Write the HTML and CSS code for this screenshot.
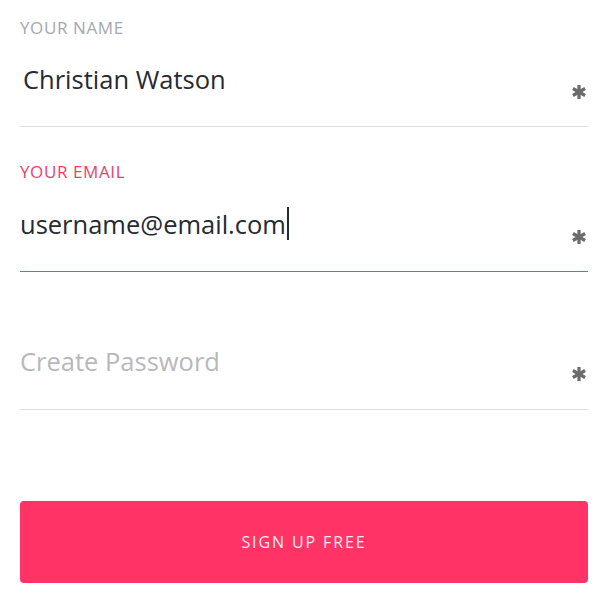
FILE: index.html
```html
<!DOCTYPE html>
<html lang="en">
<head>
<meta charset="utf-8">
<title>Sign up</title>
<link rel="stylesheet" href="styles.css">
</head>
<body>
<form class="signup">
  <div class="field">
    <label class="field-label">Your Name</label>
    <div class="field-row">
      <span class="field-value">Christian Watson</span>
      <svg class="req" viewBox="0 0 16 16" aria-hidden="true"><g stroke="#6b6b6b" stroke-width="3.2" stroke-linecap="butt"><line x1="8" y1="1" x2="8" y2="15"/><line x1="1.9" y1="4.5" x2="14.1" y2="11.5"/><line x1="1.9" y1="11.5" x2="14.1" y2="4.5"/></g></svg>
    </div>
  </div>
  <div class="field field-active">
    <label class="field-label">Your Email</label>
    <div class="field-row">
      <span class="field-value">username@email.com<span class="caret"></span></span>
      <svg class="req" viewBox="0 0 16 16" aria-hidden="true"><g stroke="#6b6b6b" stroke-width="3.2" stroke-linecap="butt"><line x1="8" y1="1" x2="8" y2="15"/><line x1="1.9" y1="4.5" x2="14.1" y2="11.5"/><line x1="1.9" y1="11.5" x2="14.1" y2="4.5"/></g></svg>
    </div>
  </div>
  <div class="field field-empty">
    <div class="field-row">
      <span class="field-value placeholder">Create Password</span>
      <svg class="req" viewBox="0 0 16 16" aria-hidden="true"><g stroke="#6b6b6b" stroke-width="3.2" stroke-linecap="butt"><line x1="8" y1="1" x2="8" y2="15"/><line x1="1.9" y1="4.5" x2="14.1" y2="11.5"/><line x1="1.9" y1="11.5" x2="14.1" y2="4.5"/></g></svg>
    </div>
  </div>
  <button type="button" class="submit">Sign up free</button>
</form>
</body>
</html>
```

FILE: styles.css
```css
html, body {
  margin: 0;
  padding: 0;
  background: #ffffff;
}

body {
  font-family: "Open Sans", "Noto Sans", "Liberation Sans", sans-serif;
  color: #262a31;
}

.signup {
  display: flex;
  flex-direction: column;
  padding: 18px 14px 0 20px;
}

.field {
  display: flex;
  flex-direction: column;
  border-bottom: 1px solid #dcdcdc;
  margin-bottom: 35px;
}

.field.field-active {
  border-bottom: 1px solid #f0406b;
}

.field-empty {
  padding-top: 38px;
}

.field-label {
  font-size: 17px;
  line-height: 20px;
  letter-spacing: 0.6px;
  text-transform: uppercase;
  color: #a3a7b0;
}

.field-active .field-label {
  color: #ef3d6b;
}

.field-row {
  display: flex;
  align-items: flex-end;
  justify-content: space-between;
  margin-top: 25px;
  padding-bottom: 31px;
}

.field-empty .field-row {
  margin-top: 0;
  padding-bottom: 32px;
}

.field-value {
  font-size: 25.5px;
  line-height: 32px;
  display: inline-flex;
  align-items: center;
}

.field:first-child .field-value {
  padding-left: 3px;
}

.placeholder {
  color: #b8b8bc;
}

.caret {
  display: inline-block;
  width: 2px;
  height: 33px;
  margin-left: 1px;
  background: #262a31;
}

.req {
  width: 16px;
  height: 16px;
  margin-right: 1px;
  margin-bottom: -5px;
  flex: none;
}

.submit {
  margin-top: 56px;
  height: 82px;
  border: none;
  border-radius: 4px;
  background: #ff3366;
  color: #ffe8ee;
  font-family: "Open Sans", "Noto Sans", "Liberation Sans", sans-serif;
  font-size: 16px;
  letter-spacing: 1.9px;
  text-transform: uppercase;
  cursor: pointer;
}
```
